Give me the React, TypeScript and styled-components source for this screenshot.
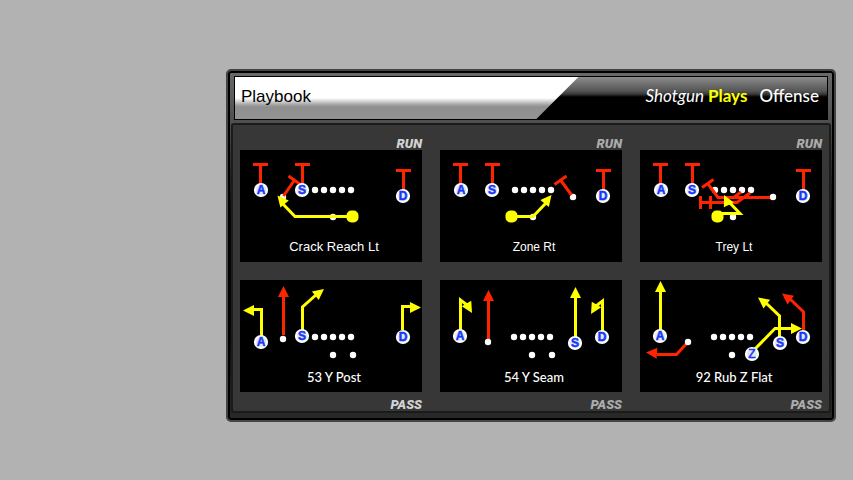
import React from "react";
import styled, { createGlobalStyle } from "styled-components";

const RED = "#ff2400";
const YELLOW = "#ffff00";

const GlobalStyle = createGlobalStyle`
  * { box-sizing: border-box; }
  body { margin: 0; background: #b2b2b2; font-family: "Liberation Sans", sans-serif; }
`;

const Page = styled.main`
  padding: 69px 17px 16px 226px;
`;

const Frame = styled.section`
  padding: 3px 3px 7px;
  border: 2px solid #444;
  border-radius: 5px;
  background:
    linear-gradient(#6a6a6a, #4e4e4e 52px, #080808 140px, #080808 260px, #2a2a2a) padding-box;
  box-shadow: inset 0 0 0 2px #000;
`;

const Header = styled.header`
  display: flex;
  height: 44px;
  margin: 2px 3px 3px;
  border: 1px solid #000;
  background: linear-gradient(#8c8c8c, #555 14px, #3a3a3a 17px, #000 20px);
`;

const TitleTab = styled.div`
  display: flex;
  align-items: center;
  flex: 0 0 58%;
  padding: 0 0 2px 6px;
  background: linear-gradient(#fff 21px, #a0a0a0 28px, #909090 30px, #939393);
  clip-path: polygon(0 0, 100% 0, calc(100% - 42px) 100%, 0 100%);
`;

const Title = styled.h1`
  margin: 0;
  font-size: 17px;
  font-weight: 400;
  line-height: 20px;
  color: #000;
`;

const Context = styled.div`
  display: flex;
  flex: 1;
  align-items: center;
  justify-content: flex-end;
  gap: 4px;
  padding: 0 8px 4px 0;
  font: 500 17px/20px Lato, sans-serif;
  color: #fff;
`;

const Formation = styled.em`
  font-weight: 400;
`;

const Plays = styled.strong`
  color: ${YELLOW};
`;

const Side = styled.span`
  margin-left: 8px;
`;

const Board = styled.div`
  display: grid;
  grid-template-columns: repeat(3, minmax(0, 1fr));
  gap: 18px;
  padding: 0 7px;
  border: 2px solid #1b1b1b;
  border-radius: 3px;
  background: #373737;
`;

const PlayCell = styled.article`
  display: flex;
  flex-direction: column;
`;

const Kind = styled.span<{ $bright?: boolean; $below?: boolean }>`
  display: flex;
  justify-content: flex-end;
  height: ${(p) => (p.$below ? 19 : 25)}px;
  padding-top: ${(p) => (p.$below ? 7 : 13)}px;
  font: italic 900 13px/12px Roboto, sans-serif;
  color: ${(p) => (p.$bright ? "#d2d2d2" : "#ababab")};
`;

const Card = styled.figure`
  display: flex;
  flex-direction: column;
  margin: 0;
  padding-bottom: 5px;
  background: #000;
`;

const Diagram = styled.svg`
  display: block;
  width: 100%;
`;

const Caption = styled.figcaption<{ $face: string; $size: number }>`
  padding-left: 6px;
  font-family: ${(p) => p.$face}, sans-serif;
  font-size: ${(p) => p.$size}px;
  font-weight: 500;
  line-height: 20px;
  text-align: center;
  color: #fff;
`;

type Pt = [number, number];

function Dots({ at }: { at: Pt[] }) {
  return <>{at.map(([x, y]) => <circle key={`${x},${y}`} cx={x} cy={y} r="3.2" fill="#fff" />)}</>;
}

function Line({ x, y = 40 }: { x: number; y?: number }) {
  return <Dots at={[0, 9, 18, 27, 36].map((d) => [x + d, y] as Pt)} />;
}

function Player({ x, y, id }: { x: number; y: number; id: string }) {
  return (
    <g>
      <circle cx={x} cy={y} r="7.1" fill="#fff" />
      <circle cx={x} cy={y} r="5" fill="#e6e6e6" />
      <text x={x} y={y + 4} textAnchor="middle" fontFamily="Liberation Sans, sans-serif" fontWeight={id === "Z" ? 400 : 700} fontSize="12" fill="#1438ff" stroke="#1438ff" strokeWidth="0.5">{id}</text>
    </g>
  );
}

function Route({ d, color = YELLOW }: { d: string; color?: string }) {
  return <path d={d} fill="none" stroke={color} strokeWidth="3" />;
}

function Head({ x, y, angle, color = YELLOW }: { x: number; y: number; angle: number; color?: string }) {
  return <path d="M0 0L-11 5.5V-5.5Z" fill={color} transform={`translate(${x} ${y}) rotate(${angle})`} />;
}

function Block({ x, top, bottom }: { x: number; top: number; bottom: number }) {
  return <Route color={RED} d={`M${x - 7.5} ${top}H${x + 7.5}M${x} ${top}V${bottom}`} />;
}

function Back({ x, y }: { x: number; y: number }) {
  return <rect x={x - 6} y={y - 6} width="12" height="12" rx="5" fill={YELLOW} />;
}

interface Play {
  name: string;
  kind: "RUN" | "PASS";
  face: string;
  size: number;
  art: React.ReactNode;
}

const SANS = '"Liberation Sans"';
const HUMANIST = "Lato";

const plays: Play[] = [
  {
    name: "Crack Reach Lt", kind: "RUN", face: SANS, size: 13,
    art: (
      <>
        <Block x={20.5} top={14.5} bottom={36} />
        <Block x={62.5} top={14.5} bottom={36} />
        <Block x={163.5} top={20.5} bottom={42} />
        <Dots at={[[43, 47], [93, 67]]} />
        <Line x={75} />
        <Route color={RED} d="M43.5 46L54.5 30M48.5 26L60.5 34.5" />
        <Route d="M112 66.5H55L41 52" />
        <Head x={37.5} y={45.5} angle={-130} />
        <Back x={112.5} y={66.5} />
        <Player x={21} y={40} id="A" />
        <Player x={62} y={40} id="S" />
        <Player x={163} y={46} id="D" />
      </>
    ),
  },
  {
    name: "Zone Rt", kind: "RUN", face: SANS, size: 12,
    art: (
      <>
        <Block x={20.5} top={14.5} bottom={36} />
        <Block x={52.5} top={14.5} bottom={36} />
        <Block x={163.5} top={20.5} bottom={42} />
        <Line x={75} />
        <Dots at={[[133, 47], [93, 67]]} />
        <Route color={RED} d="M131.5 45L120.5 30M114.5 34.5L126.5 26" />
        <Route d="M71 66.5H93L106 53" />
        <Head x={111.5} y={45} angle={-51} />
        <Back x={71.5} y={66.5} />
        <Player x={21} y={40} id="A" />
        <Player x={52} y={40} id="S" />
        <Player x={163} y={46} id="D" />
      </>
    ),
  },
  {
    name: "Trey Lt", kind: "RUN", face: SANS, size: 12,
    art: (
      <>
        <Block x={20.5} top={14.5} bottom={36} />
        <Block x={52.5} top={14.5} bottom={36} />
        <Block x={163.5} top={20.5} bottom={42} />
        <Line x={75} />
        <Dots at={[[133, 47], [93, 67]]} />
        <Route color={RED} d="M130 47.5H78L68 34M62 37.5L73.5 29.5M60.5 46V59M70.5 46V59M60.5 52.5H97L110 43M93 48L101 42" />
        <Route d="M77 64.5L79 63.5H100L88 51" />
        <Head x={84} y={45} angle={-116} />
        <Back x={77.5} y={66.5} />
        <Player x={21} y={40} id="A" />
        <Player x={52} y={40} id="S" />
        <Player x={163} y={46} id="D" />
      </>
    ),
  },
  {
    name: "53 Y Post", kind: "PASS", face: HUMANIST, size: 13,
    art: (
      <>
        <Route d="M21.5 57V29.5H13" />
        <Head x={3} y={30.5} angle={180} />
        <Route color={RED} d="M43.5 55V15" />
        <Head x={43.5} y={6} angle={-90} color={RED} />
        <Route d="M62.5 50V27L77 14" />
        <Head x={84} y={9} angle={-38} />
        <Route d="M162.5 50V26.5H171" />
        <Head x={181} y={27.5} angle={0} />
        <Line x={75} y={57} />
        <Dots at={[[43, 59], [93, 75], [113, 75]]} />
        <Player x={21} y={62} id="A" />
        <Player x={62} y={56} id="S" />
        <Player x={163} y={57} id="D" />
      </>
    ),
  },
  {
    name: "54 Y Seam", kind: "PASS", face: HUMANIST, size: 13,
    art: (
      <>
        <Route d="M20.5 50V20L27 25" />
        <Head x={32} y={33} angle={60} />
        <Route color={RED} d="M48.5 60V20" />
        <Head x={48.5} y={10} angle={-90} color={RED} />
        <Route d="M135.5 57V16" />
        <Head x={135.5} y={7} angle={-90} />
        <Route d="M162.5 51V21L156 26" />
        <Head x={151} y={34} angle={120} />
        <Line x={74} y={57} />
        <Dots at={[[48, 62], [92, 75], [112, 75]]} />
        <Player x={20} y={56} id="A" />
        <Player x={135} y={63} id="S" />
        <Player x={162} y={57} id="D" />
      </>
    ),
  },
  {
    name: "92 Rub Z Flat", kind: "PASS", face: HUMANIST, size: 13,
    art: (
      <>
        <Route d="M20.5 50V11" />
        <Head x={20.5} y={1} angle={-90} />
        <Route color={RED} d="M47 63L36.5 74.5H17" />
        <Head x={6} y={72.5} angle={184} color={RED} />
        <Route d="M114 70L135 48.5H153" />
        <Head x={162} y={48.5} angle={0} />
        <Route d="M139.5 57V36L126 23" />
        <Head x={118} y={17.5} angle={-143} />
        <Route color={RED} d="M163.5 50V32L150 19" />
        <Head x={142} y={13.5} angle={-143} color={RED} />
        <Line x={74} y={57} />
        <Dots at={[[48, 62], [92, 75]]} />
        <Player x={112} y={74} id="Z" />
        <Player x={140} y={63} id="S" />
        <Player x={163} y={57} id="D" />
        <Player x={20} y={56} id="A" />
      </>
    ),
  },
];

export default function App() {
  return (
    <Page>
      <GlobalStyle />
      <Frame>
        <Header>
          <TitleTab><Title>Playbook</Title></TitleTab>
          <Context>
            <Formation>Shotgun</Formation>
            <Plays>Plays</Plays>
            <Side>Offense</Side>
          </Context>
        </Header>
        <Board>
          {plays.map((play, i) => (
            <PlayCell key={play.name}>
              {play.kind === "RUN" && <Kind $bright={i % 3 === 0}>RUN</Kind>}
              <Card>
                <Diagram viewBox="0 0 182 87" aria-hidden="true">{play.art}</Diagram>
                <Caption $face={play.face} $size={play.size}>{play.name}</Caption>
              </Card>
              {play.kind === "PASS" && <Kind $below $bright={i % 3 === 0}>PASS</Kind>}
            </PlayCell>
          ))}
        </Board>
      </Frame>
    </Page>
  );
}
